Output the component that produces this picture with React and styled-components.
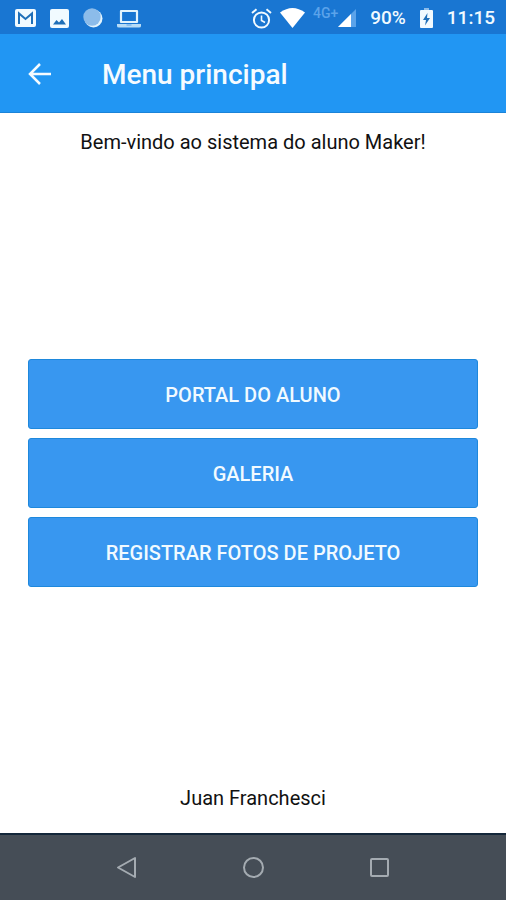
import React from "react";
import styled, { createGlobalStyle } from "styled-components";

const GlobalStyle = createGlobalStyle`
  * {
    box-sizing: border-box;
  }
  body {
    margin: 0;
    background-color: #fff;
    font-family: Roboto, "Liberation Sans", sans-serif;
  }
  button {
    font-family: inherit;
    border: 0;
    padding: 0;
    cursor: pointer;
  }
`;

const Screen = styled.div`
  min-height: 100vh;
  display: flex;
  flex-direction: column;
`;

const StatusBar = styled.div`
  height: 34px;
  padding: 2px 11px 0 15px;
  display: flex;
  align-items: center;
  justify-content: space-between;
  background-color: #1976d2;
  color: #f1faff;
`;

const StatusGroup = styled.div`
  display: flex;
  align-items: center;
  gap: ${(props) => props.$gap};
`;

const Network = styled.div`
  display: flex;
  align-items: flex-start;
`;

const NetworkType = styled.span`
  font-size: 14px;
  line-height: 8px;
  font-weight: 500;
  color: #5ba3ea;
`;

const StatusText = styled.span`
  font-size: 19px;
  line-height: 24px;
  font-weight: 500;
`;

const Header = styled.header`
  height: 79px;
  padding: 2px 24px 0;
  display: flex;
  align-items: center;
  gap: 48px;
  background-color: #2196f3;
  border-bottom: 1px solid #1b83d8;
`;

const BackButton = styled.button`
  width: 30px;
  height: 30px;
  display: flex;
  align-items: center;
  justify-content: center;
  background: none;
  color: #f5fbff;
`;

const Title = styled.h1`
  margin: 0;
  padding-top: 2px;
  font-size: 28px;
  line-height: 32px;
  font-weight: 500;
  color: #f5fbff;
`;

const Main = styled.main`
  flex: 1;
  display: grid;
  grid-template-rows: 1fr auto 1fr;
`;

const Text = styled.p`
  margin: 0;
  padding: 17px 24px 23px;
  align-self: ${(props) => props.$align};
  font-size: 20px;
  line-height: 24px;
  text-align: center;
  color: #111;
`;

const Menu = styled.nav`
  padding: 0 28px;
  display: flex;
  flex-direction: column;
  gap: 9px;
`;

const MenuButton = styled.button`
  height: 70px;
  padding-top: 2px;
  border: 1px solid #1e88dc;
  border-radius: 3px;
  background-color: #3897f0;
  color: #f1faff;
  font-size: 20px;
  font-weight: 500;
  text-transform: uppercase;
`;

const NavBar = styled.nav`
  height: 67px;
  padding: 0 12.5%;
  display: grid;
  grid-template-columns: repeat(3, 1fr);
  background-color: #454d56;
  border-top: 2px solid #14273a;
`;

const NavButton = styled.button`
  display: flex;
  align-items: center;
  justify-content: center;
  background: none;
  color: #a4abb1;
`;

const MailIcon = () => (
  <svg width="21" height="18" viewBox="0 0 21 18">
    <rect width="21" height="18" rx="2" fill="#f1faff" />
    <path
      d="M4 15V4.500L10.500 10L17 4.500V15"
      fill="none"
      stroke="#1f6fb8"
      strokeWidth="2"
    />
  </svg>
);

const ImageIcon = () => (
  <svg width="19" height="19" viewBox="0 0 19 19">
    <rect width="19" height="19" rx="2" fill="#f1faff" />
    <path d="M3 15.500L6.500 11L9 13.500L12 10L16 15.500Z" fill="#1f6fb8" />
  </svg>
);

const CircleIcon = () => (
  <svg width="20" height="20" viewBox="0 0 20 20">
    <circle cx="10.500" cy="10.500" r="9" fill="#e3f4fd" />
    <circle cx="9" cy="9" r="8.700" fill="#8cbcea" />
  </svg>
);

const LaptopIcon = () => (
  <svg width="24" height="19" viewBox="0 0 24 19">
    <path
      d="M4 2H20V13H4Z"
      fill="none"
      stroke="#e3f4fd"
      strokeWidth="2.200"
      strokeLinejoin="round"
    />
    <path d="M0 15H24V17Q24 18.500 22 18.500H2Q0 18.500 0 17Z" fill="#b7dcf6" />
    <path d="M9.500 16H14.500" stroke="#5ba3ea" strokeWidth="1" />
  </svg>
);

const AlarmIcon = () => (
  <svg
    width="21"
    height="21"
    viewBox="0 0 21 21"
    fill="none"
    stroke="currentColor"
    strokeWidth="2"
  >
    <circle cx="10.500" cy="12" r="7.600" />
    <path d="M10.500 7.500V12.500L14 14.500" strokeWidth="1.600" />
    <path d="M1 5L5.500 1.300M20 5L15.500 1.300" />
  </svg>
);

const WifiIcon = () => (
  <svg width="25" height="20" viewBox="0 0 25 20">
    <path d="M0 4.500Q12.500 -4.500 25 4.500L12.500 20Z" fill="#fff" />
  </svg>
);

const SignalIcon = () => (
  <svg width="18" height="18" viewBox="0 0 18 18">
    <path d="M0 18L18 0V18Z" fill="#5ba3ea" />
    <path d="M0 18L13 5V18Z" fill="#fff" />
  </svg>
);

const BatteryIcon = () => (
  <svg width="13" height="20" viewBox="0 0 13 20">
    <rect x="4" width="5" height="3" fill="#8cbcea" />
    <rect y="2" width="13" height="18" rx="1" fill="#f1faff" />
    <path d="M7.500 5L3 12H6L5 17.500L10 10H7Z" fill="#1f6fb8" />
  </svg>
);

const BackIcon = () => (
  <svg
    width="24"
    height="22"
    viewBox="0 0 24 22"
    fill="none"
    stroke="currentColor"
    strokeWidth="2.500"
  >
    <path d="M24 11H3.500M13 1L3 11L13 21" />
  </svg>
);

const navIcons = [
  { label: "Voltar", shape: <path d="M20 2V21L3 11.500Z" /> },
  { label: "Início", shape: <circle cx="11.500" cy="11.500" r="9.500" /> },
  {
    label: "Recentes",
    shape: <rect x="3" y="3" width="17" height="17" rx="1" />,
  },
];

const menuItems = ["Portal do aluno", "Galeria", "Registrar fotos de projeto"];

const App = () => (
  <>
    <GlobalStyle />
    <Screen>
      <StatusBar>
        <StatusGroup $gap="14px">
          <MailIcon />
          <ImageIcon />
          <CircleIcon />
          <LaptopIcon />
        </StatusGroup>
        <StatusGroup $gap="14px">
          <StatusGroup $gap="8px">
            <AlarmIcon />
            <WifiIcon />
            <Network>
              <NetworkType>4G+</NetworkType>
              <SignalIcon />
            </Network>
          </StatusGroup>
          <StatusText>90%</StatusText>
          <BatteryIcon />
          <StatusText>11:15</StatusText>
        </StatusGroup>
      </StatusBar>
      <Header>
        <BackButton aria-label="Voltar">
          <BackIcon />
        </BackButton>
        <Title>Menu principal</Title>
      </Header>
      <Main>
        <Text $align="start">Bem-vindo ao sistema do aluno Maker!</Text>
        <Menu>
          {menuItems.map((item) => (
            <MenuButton key={item}>{item}</MenuButton>
          ))}
        </Menu>
        <Text $align="end">Juan Franchesci</Text>
      </Main>
      <NavBar>
        {navIcons.map((icon) => (
          <NavButton key={icon.label} aria-label={icon.label}>
            <svg
              width="23"
              height="23"
              viewBox="0 0 23 23"
              fill="none"
              stroke="currentColor"
              strokeWidth="2"
              strokeLinejoin="round"
            >
              {icon.shape}
            </svg>
          </NavButton>
        ))}
      </NavBar>
    </Screen>
  </>
);

export default App;
